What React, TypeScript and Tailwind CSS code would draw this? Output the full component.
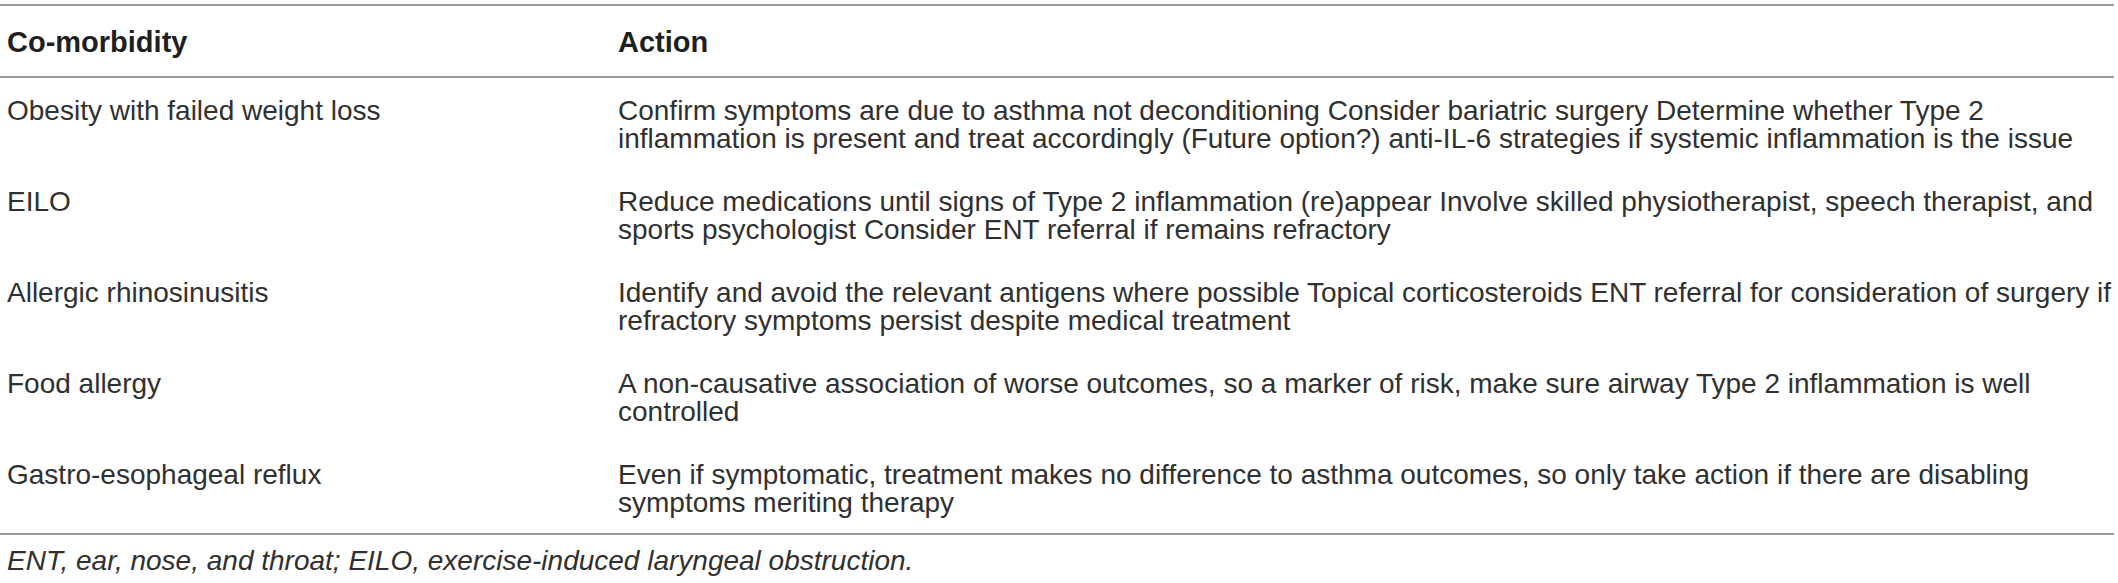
const rows = [
  {
    name: "Obesity with failed weight loss",
    action:
      "Confirm symptoms are due to asthma not deconditioning Consider bariatric surgery Determine whether Type 2 inflammation is present and treat accordingly (Future option?) anti-IL-6 strategies if systemic inflammation is the issue",
  },
  {
    name: "EILO",
    action:
      "Reduce medications until signs of Type 2 inflammation (re)appear Involve skilled physiotherapist, speech therapist, and sports psychologist Consider ENT referral if remains refractory",
  },
  {
    name: "Allergic rhinosinusitis",
    action:
      "Identify and avoid the relevant antigens where possible Topical corticosteroids ENT referral for consideration of surgery if refractory symptoms persist despite medical treatment",
  },
  {
    name: "Food allergy",
    action:
      "A non-causative association of worse outcomes, so a marker of risk, make sure airway Type 2 inflammation is well controlled",
  },
  {
    name: "Gastro-esophageal reflux",
    action:
      "Even if symptomatic, treatment makes no difference to asthma outcomes, so only take action if there are disabling symptoms meriting therapy",
  },
];

export default function App() {
  return (
    <div className="w-[2118px] h-[583px] bg-white pt-1 text-[#303030] font-['Liberation_Sans',Arial,sans-serif]">
      <table className="w-[2114px] border-collapse table-fixed">
        <colgroup>
          <col className="w-[611px]" />
          <col />
        </colgroup>
        <thead>
          <tr className="border-t-2 border-b-2 border-[#9a9a9a]">
            <th className="pl-[7px] pt-[22px] pb-[20px] text-left text-[29px] leading-[28px] font-bold text-[#1f1f1f]">
              Co-morbidity
            </th>
            <th className="pl-[7px] pt-[22px] pb-[20px] text-left text-[29px] leading-[28px] font-bold text-[#1f1f1f]">
              Action
            </th>
          </tr>
        </thead>
        <tbody>
          {rows.map((r, i) => (
            <tr
              key={r.name}
              className={i === rows.length - 1 ? "border-b-2 border-[#9a9a9a]" : ""}
            >
              <td className="pl-[7px] pt-[19px] pb-[16px] align-top text-[28px] leading-[28px]">
                {r.name}
              </td>
              <td className="pl-[7px] pr-0 pt-[19px] pb-[16px] align-top text-[28px] leading-[28px]">
                {r.action}
              </td>
            </tr>
          ))}
        </tbody>
      </table>
      <p className="pl-[7px] pt-[12px] text-[28px] leading-[28px] italic">
        ENT, ear, nose, and throat; EILO, exercise-induced laryngeal obstruction.
      </p>
    </div>
  );
}
